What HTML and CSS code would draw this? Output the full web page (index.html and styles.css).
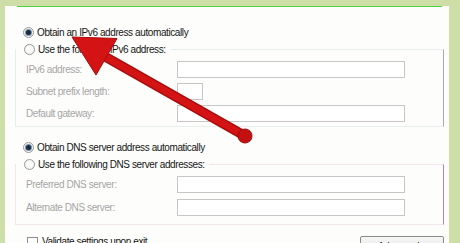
FILE: index.html
```html
<!DOCTYPE html>
<html lang="en">
<head>
<meta charset="UTF-8">
<title>IPv6 Properties</title>
<link rel="stylesheet" href="styles.css">
</head>
<body>
<div class="frame">
    <div class="panel">
        <div class="topline"></div>
        <label class="option">
            <span class="radio checked"></span>
            <span>Obtain an IPv6 address automatically</span>
        </label>
        <fieldset class="group group-ip">
            <legend class="option">
                <span class="radio"></span>
                <span>Use the following IPv6 address:</span>
            </legend>
            <div class="field">
                <span class="field-label">IPv6 address:</span>
                <span class="input"></span>
            </div>
            <div class="field">
                <span class="field-label">Subnet prefix length:</span>
                <span class="input small"></span>
            </div>
            <div class="field">
                <span class="field-label">Default gateway:</span>
                <span class="input"></span>
            </div>
        </fieldset>
        <label class="option dns-auto">
            <span class="radio checked"></span>
            <span>Obtain DNS server address automatically</span>
        </label>
        <fieldset class="group group-dns">
            <legend class="option">
                <span class="radio"></span>
                <span>Use the following DNS server addresses:</span>
            </legend>
            <div class="field">
                <span class="field-label">Preferred DNS server:</span>
                <span class="input"></span>
            </div>
            <div class="field">
                <span class="field-label">Alternate DNS server:</span>
                <span class="input"></span>
            </div>
        </fieldset>
        <div class="footer">
            <label class="option">
                <span class="checkbox"></span>
                <span>Validate settings upon exit</span>
            </label>
            <button class="btn">Advanced...</button>
        </div>
    </div>
</div>
<svg class="arrow" width="460" height="243" viewBox="0 0 460 243">
    <line x1="245" y1="136" x2="104" y2="56" stroke="#a80c0c" stroke-width="10" stroke-linecap="round"/>
    <line x1="245" y1="136" x2="104" y2="56" stroke="#d41414" stroke-width="7" stroke-linecap="round"/>
    <circle cx="245" cy="136" r="7" fill="#c41010" stroke="#a00a0a" stroke-width="1"/>
    <polygon points="72,37 117,38.5 96,75" fill="#d41414" stroke="#a80c0c" stroke-width="1" stroke-linejoin="round"/>
</svg>
</body>
</html>
```

FILE: styles.css
```css
* {
    margin: 0;
    padding: 0;
    box-sizing: border-box;
}
body {
    width: 460px;
    height: 243px;
    overflow: hidden;
    background: #cddfa7;
    font-family: 'Liberation Sans', Arial, sans-serif;
    font-size: 10px;
    letter-spacing: -0.4px;
    color: #151515;
    position: relative;
}
.frame {
    padding: 6px 11px 0 5px;
    height: 243px;
}
.panel {
    background: #fdfdfb;
    height: 237px;
    padding: 0 5px 0 0;
    overflow: hidden;
}
.topline {
    height: 1px;
    margin-left: 12px;
    margin-right: 2px;
    background: #4fd23e;
    margin-bottom: 17px;
}
.option {
    display: flex;
    align-items: center;
    height: 17px;
    gap: 3px;
    padding-left: 18px;
}
.radio {
    width: 11px;
    height: 11px;
    border-radius: 50%;
    border: 1px solid #9a9a9a;
    background: radial-gradient(circle, #ffffff 40%, #e4e4e4 100%);
    position: relative;
    flex-shrink: 0;
}
.radio.checked::after {
    content: '';
    position: absolute;
    left: 2px;
    top: 2px;
    width: 5px;
    height: 5px;
    border-radius: 50%;
    background: #1d2a3a;
    box-shadow: 0 0 0 1px #6f8fb0;
}
.group {
    margin-left: 10px;
    border: 1px solid #e6eef0;
    border-right-color: #a7a4dc;
}
.group legend.option {
    padding-left: 8px;
    padding-right: 4px;
    margin-left: 0;
    background: #fdfdfb;
}
.group-ip {
    display: flex;
    flex-direction: column;
    gap: 5px;
    padding: 3px 0 4px 0;
}
.group-dns {
    display: flex;
    flex-direction: column;
    gap: 6px;
    padding: 3px 0 8px 0;
    border-color: #f4e4ee;
    border-right-color: #a783d0;
}
.field {
    display: flex;
    align-items: center;
    height: 17px;
    padding-left: 10px;
}
.field-label {
    width: 151px;
    color: #a5a5a5;
}
.input {
    width: 228px;
    height: 17px;
    border: 1px solid #c6c6c6;
    background: #ffffff;
}
.input.small {
    width: 26px;
}
.dns-auto {
    margin-top: 12px;
}
.footer {
    display: flex;
    justify-content: space-between;
    align-items: flex-start;
    margin-top: 11px;
    padding-left: 4px;
}
.footer .option {
    height: 17px;
    align-items: flex-start;
    gap: 4px;
}
.checkbox {
    width: 11px;
    height: 11px;
    border: 1px solid #8e8e8e;
    background: #fcfcfc;
    margin-top: 1px;
}
.btn {
    width: 84px;
    height: 20px;
    border: 1px solid #8a8a8a;
    border-radius: 2px;
    background: linear-gradient(#f6f6f6, #e2e2e2);
    font-family: inherit;
    font-size: 10px;
    letter-spacing: -0.4px;
    color: #151515;
    padding-top: 1px;
    margin-top: 0;
}
.arrow {
    position: absolute;
    left: 0;
    top: 0;
}
```
